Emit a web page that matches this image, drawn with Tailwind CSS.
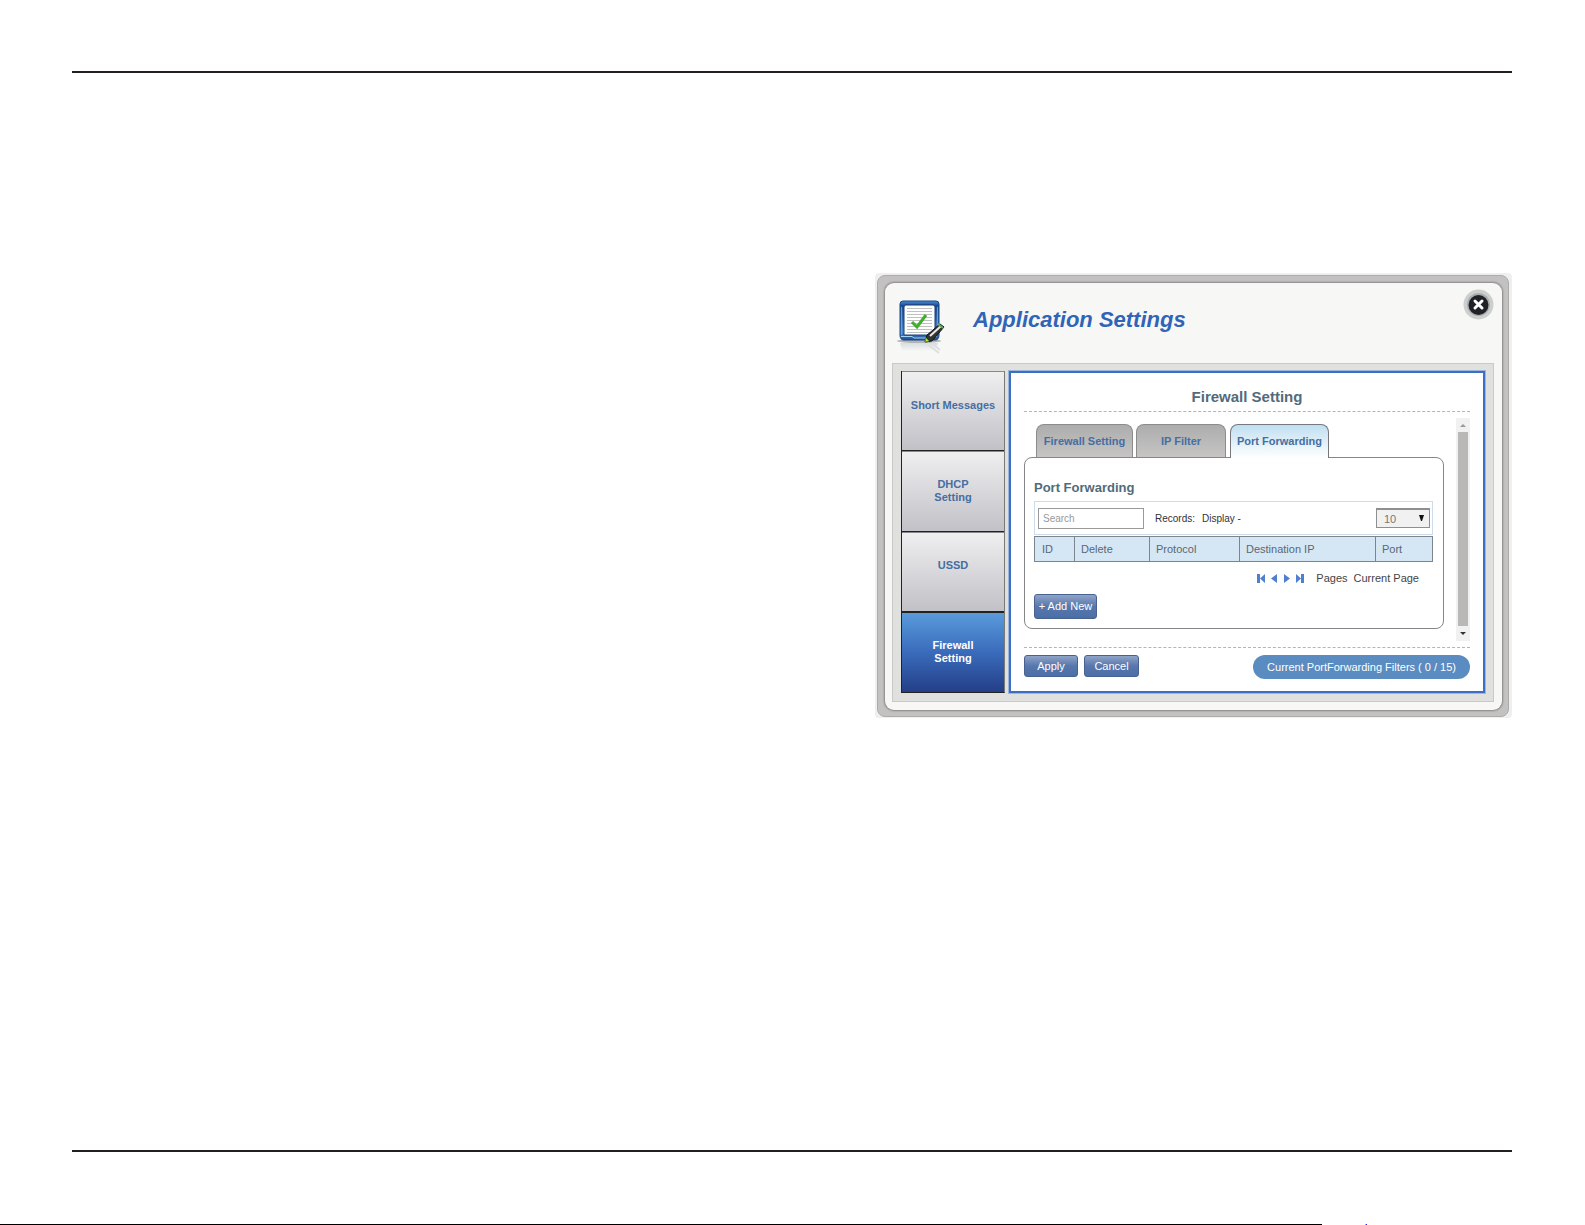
<!DOCTYPE html>
<html lang="en">
<head>
  <meta charset="UTF-8" />
  <meta name="viewport" content="width=device-width, initial-scale=1.0"/>
  <script src="https://cdn.jsdelivr.net/npm/@tailwindcss/browser@4"></script>
  <title>Application Settings</title>
</head>
<body class="bg-white font-['Liberation_Sans',Arial,sans-serif] min-h-screen flex flex-col">
  <main class="flex-1 flex flex-col ml-[72px] mr-[73px] mt-[71px] mb-[72px] border-y-2 border-[#231f20]">

    <!-- dialog -->
    <section class="self-end mt-[200px] w-[637px] max-w-full bg-[#efefef] p-[2px] pr-[3px] pb-[1px] rounded-sm">
      <div class="bg-[#c3c2c0] border border-[#adacaa] rounded-lg p-[7px] pb-[6px] pr-[6px]">
        <div class="bg-[#f7f7f5] rounded-[9px] pl-[7px] pr-[8px] pb-[8px] shadow-[0_0_2px_1px_#858585]">

          <header class="flex items-start h-[80px]">
            <svg class="ml-[4px] mt-[16px] w-[50px] h-[56px]" viewBox="0 0 50 56" fill="none">
              <defs>
                <linearGradient id="frame" x1="0" y1="0" x2="0" y2="1">
                  <stop offset="0" stop-color="#4a8fd6"/><stop offset=".12" stop-color="#1a4a90"/><stop offset=".8" stop-color="#4a8ad0"/><stop offset="1" stop-color="#1c4e92"/>
                </linearGradient>
                <linearGradient id="fade" x1="0" y1="0" x2="0" y2="1">
                  <stop offset="0" stop-color="#b9c4cf"/><stop offset="1" stop-color="#f7f7f5"/>
                </linearGradient>
              </defs>
              <ellipse cx="23" cy="42" rx="22" ry="2" fill="#b5b5b5"/>
              <path d="M4 44h38l-2 8H6z" fill="url(#fade)" opacity=".5"/>
              <path d="M31 45l12 9M36 44l8 7" stroke="#dcdfe1" stroke-width="2"/>
              <path d="M7 2h33q3 0 3 3v31q0 5-4 5H8q-4 0-4-5V5q0-3 3-3z" fill="url(#frame)" stroke="#174684"/>
              <path d="M5.500 8v28M41.500 8v28" stroke="#5d9ee0"/>
              <path d="M10 6h27q2 0 2 2v28H8V8q0-2 2-2z" fill="#fff" stroke="#173b70"/>
              <path d="M11 9.500h25M11 12.500h25M11 15.500h25M11 18.500h25M11 21.500h25M11 24.500h25M11 27.500h25M11 30.500h25M11 33.500h25" stroke="#c0c0c0"/>
              <path d="M5 37.500h11l2 1.500h12l2-1.500h9" stroke="#a6d1f6"/>
              <path d="M16 23l5 5 9-12" stroke="#41ad2b" stroke-width="3"/>
              <path d="M29 43l2-7 13-11 4 3-12 14z" fill="#333" stroke="#161616"/>
              <path d="M34 37l11-10" stroke="#ececec" stroke-width="2"/>
              <path d="M42 25l5 4" stroke="#5fac62" stroke-width="2"/>
              <path d="M29 43l1-4 3 3z" fill="#d7e837" stroke="#4f9c36"/>
            </svg>
            <h1 class="ml-[27px] mt-[24px] text-[22px] leading-[26px] font-bold italic text-[#3064b8]">Application Settings</h1>
            <button aria-label="Close" class="ml-auto mt-[6px] w-[31px] h-[31px]">
              <svg class="w-[31px] h-[31px]" viewBox="0 0 31 31" fill="none">
                <circle cx="15.500" cy="15.500" r="15" fill="#cdcfcd"/>
                <circle cx="15.500" cy="15.500" r="11.500" fill="#a9aeb1"/>
                <circle cx="15.500" cy="16" r="10" fill="#212226"/>
                <path d="M12 12l7 7M19 12l-7 7" stroke="#fff" stroke-width="3" stroke-linecap="round"/>
              </svg>
            </button>
          </header>

          <div class="flex gap-[4px] bg-[#e0e0df] border border-[#c9c9c8] p-[8px] pt-[7px]">

            <nav class="w-[104px] shrink-0 grid grid-rows-4 text-[11px] leading-[13px] font-bold text-[#456ea3] text-center border border-[#222] border-t-0 border-r-[#777b78]">
              <a href="#" class="flex items-center justify-center pb-[12px] border-b border-b-[#222] border-t border-t-[#85898a] bg-linear-to-b from-[#efeff0] to-[#c2c1c7]">Short Messages</a>
              <a href="#" class="flex items-center justify-center border-b border-b-[#222] border-t border-t-[#85898a] bg-linear-to-b from-[#efeff0] to-[#c2c1c7]">DHCP<br>Setting</a>
              <a href="#" class="flex items-center justify-center pb-[12px] border-b border-b-[#222] border-t border-t-[#85898a] bg-linear-to-b from-[#efeff0] to-[#c2c1c7]">USSD</a>
              <a href="#" class="flex items-center justify-center border-t border-t-[#222] text-white bg-linear-to-b from-[#5a9bdb] via-[#3a6bbb] to-[#243f88]">Firewall<br>Setting</a>
            </nav>

            <div class="flex-1 min-w-0 bg-white border-2 border-[#3b6fc4] outline outline-[#9db6dc] px-[13px] pb-[12px]">
              <h2 class="text-[15px] leading-[18px] pt-[15px] pb-[5px] font-bold text-center text-[#526b7a] border-b border-dashed border-[#b5b5b5]">Firewall Setting</h2>

              <div class="flex justify-between mt-[6px] h-[223px]">
                <div class="w-[420px] pt-[6px]">
                  <div role="tablist" class="relative z-10 flex pl-[12px] h-[34px] -mb-px text-[11px] font-bold text-[#456ea3]">
                    <button role="tab" class="w-[97px] mr-[3px] h-[33px] rounded-t-lg border border-b-0 border-[#8c8c8c] bg-linear-to-b from-[#adadad] to-[#c6c5c4]">Firewall Setting</button>
                    <button role="tab" class="w-[90px] mr-[4px] h-[33px] rounded-t-lg border border-b-0 border-[#8c8c8c] bg-linear-to-b from-[#adadad] to-[#c6c5c4]">IP Filter</button>
                    <button role="tab" aria-selected="true" class="w-[99px] h-[34px] rounded-t-lg border border-b-0 border-[#77787c] bg-linear-to-b from-[#c0dff1] to-white">Port Forwarding</button>
                  </div>

                  <div class="h-[172px] border border-[#85868a] rounded-lg pl-[9px] pr-[10px] pt-[22px]">
                    <h3 class="text-[13px] leading-[16px] font-bold text-[#526b7a] mb-[5px]">Port Forwarding</h3>

                    <div class="flex items-center h-[34px] border border-[#cddcea] pl-[3px] pr-[2px] text-[10px] text-[#333]">
                      <input type="text" aria-label="Search" placeholder="Search" class="w-[106px] h-[21px] border border-[#999] px-[4px] bg-white placeholder:text-[#999]">
                      <span class="ml-[11px]">Records:</span>
                      <span class="ml-[7px]">Display -</span>
                      <div class="relative ml-auto">
                        <select aria-label="Records per page" class="block appearance-none w-[54px] h-[20px] border border-t-2 border-[#8f8f8f] bg-[#f1f1f1] pl-[7px] text-[11px] leading-[16px] text-[#777]">
                          <option>10</option>
                        </select>
                        <svg class="absolute right-[6px] top-[7px] w-[5px] h-[6px] pointer-events-none" viewBox="0 0 5 6"><path d="M0 0h5L3 6H2z" fill="#111"/></svg>
                      </div>
                    </div>

                    <table class="w-full mt-[1px] table-fixed border-collapse text-[11px] text-[#5a6873] text-left">
                      <tr class="h-[25px] bg-[#d5e7f4]">
                        <th class="w-[40px] border border-[#7c858c] pl-[7px] font-normal">ID</th>
                        <th class="w-[75px] border border-[#7c858c] pl-[6px] font-normal">Delete</th>
                        <th class="w-[90px] border border-[#7c858c] pl-[6px] font-normal">Protocol</th>
                        <th class="w-[136px] border border-[#7c858c] pl-[6px] font-normal">Destination IP</th>
                        <th class="border border-[#7c858c] pl-[6px] font-normal">Port</th>
                      </tr>
                    </table>

                    <div class="flex items-center justify-end pr-[14px] mt-[9px] text-[11px] leading-[14px] text-[#444]">
                      <div class="flex gap-[5px] mr-[12px]">
                        <button aria-label="First page"><svg class="w-[8px] h-[9px]" viewBox="0 0 8 9"><path d="M0 0h3v9H0zM8 0v9L3 4.500z" fill="#4f7fd0"/></svg></button>
                        <button aria-label="Previous page"><svg class="w-[8px] h-[9px]" viewBox="0 0 8 9"><path d="M7 0v9L1 4.500z" fill="#4f7fd0"/></svg></button>
                        <button aria-label="Next page"><svg class="w-[8px] h-[9px]" viewBox="0 0 8 9"><path d="M1 0v9l6-4.500z" fill="#4f7fd0"/></svg></button>
                        <button aria-label="Last page"><svg class="w-[8px] h-[9px]" viewBox="0 0 8 9"><path d="M5 0h3v9H5zM0 0v9l5-4.500z" fill="#4f7fd0"/></svg></button>
                      </div>
                      <span class="mr-[6px]">Pages</span>
                      <span>Current Page</span>
                    </div>

                    <button class="block mt-[9px] w-[63px] h-[25px] rounded-[3px] border border-[#48618f] bg-linear-to-b from-[#8fa4c8] via-[#5877ac] to-[#4a6fa8] text-[11px] text-white">+ Add New</button>
                  </div>
                </div>

                <!-- scrollbar -->
                <div class="w-[14px] bg-[#f1f1f1] flex flex-col items-center">
                  <svg class="w-[14px] h-[14px]" viewBox="0 0 14 14"><path d="M4 9h6L7 6z" fill="#999"/></svg>
                  <div class="w-[10px] flex-1 bg-[#b9b8b7]"></div>
                  <svg class="w-[14px] h-[15px]" viewBox="0 0 14 15"><path d="M4 6h6L7 9z" fill="#333"/></svg>
                </div>
              </div>

              <footer class="flex items-start mt-[6px] pt-[7px] border-t border-dashed border-[#b5b5b5] text-[11px] text-white">
                <button class="w-[54px] h-[22px] rounded-[3px] border border-[#48618f] bg-linear-to-b from-[#8fa4c8] via-[#5877ac] to-[#4a6fa8] mr-[6px]">Apply</button>
                <button class="w-[55px] h-[22px] rounded-[3px] border border-[#48618f] bg-linear-to-b from-[#8fa4c8] via-[#5877ac] to-[#4a6fa8]">Cancel</button>
                <span class="ml-auto h-[24px] leading-[24px] px-[14px] rounded-full bg-[#5a8bc1]">Current PortForwarding Filters ( 0 / 15)</span>
              </footer>
            </div>
          </div>
        </div>
      </div>
    </section>
  </main>

  <div class="flex h-px">
    <div class="w-[1322px] bg-black"></div>
    <div class="ml-[43px] w-px bg-[#e8b040]"></div>
    <div class="w-px bg-[#2020ff]"></div>
  </div>
</body>
</html>
